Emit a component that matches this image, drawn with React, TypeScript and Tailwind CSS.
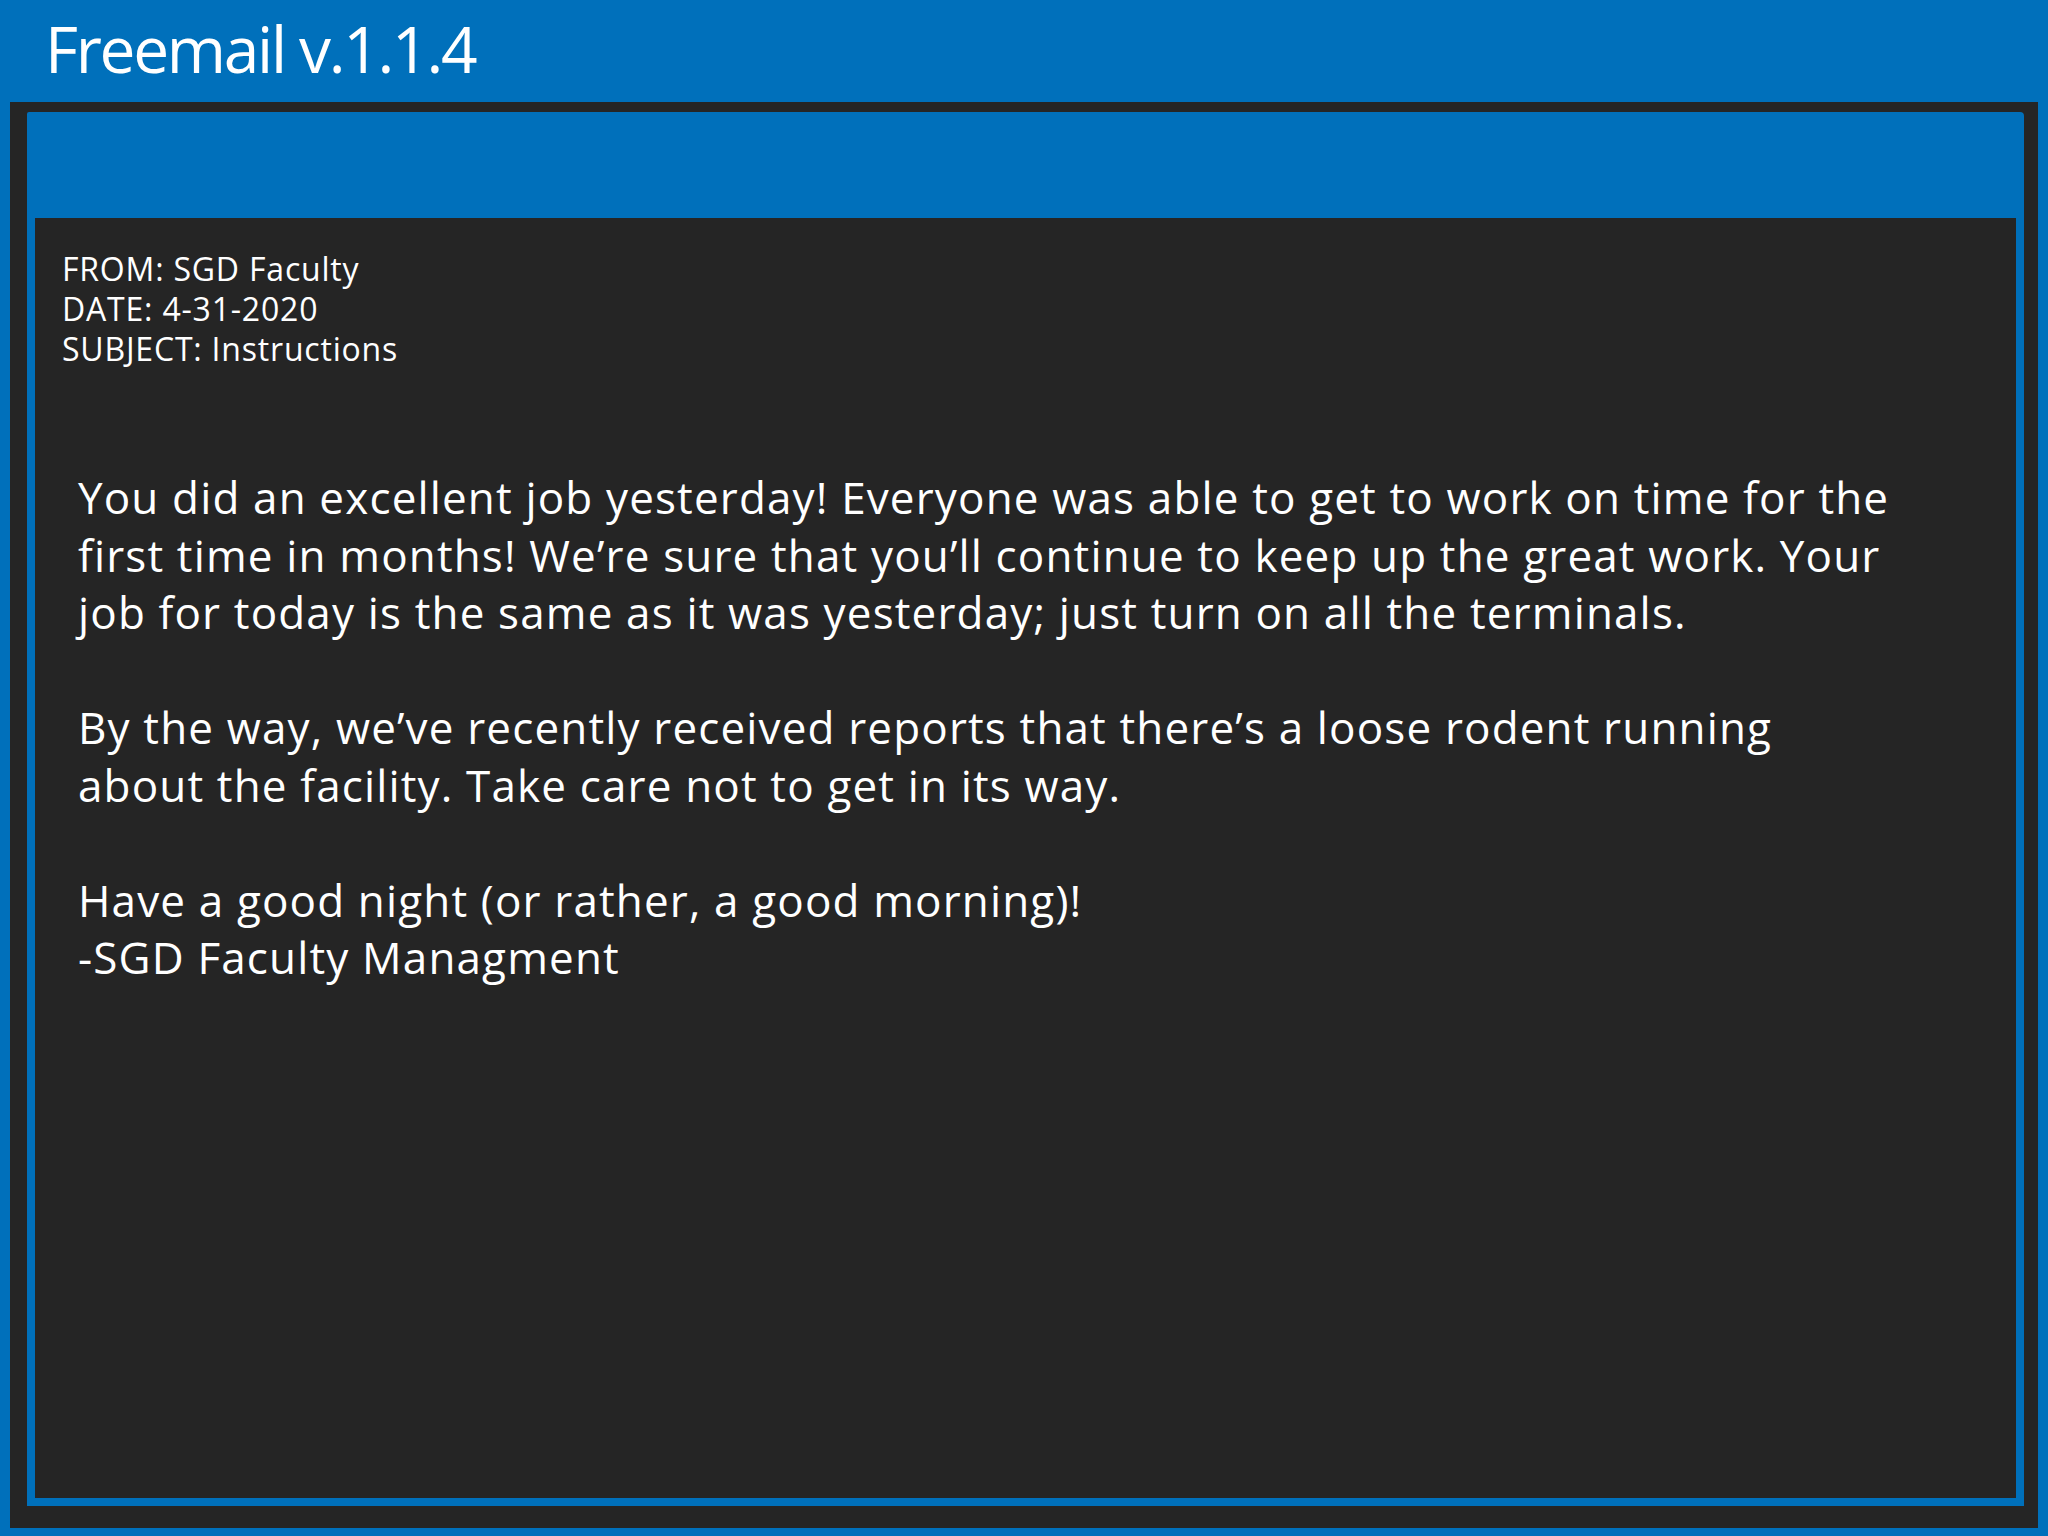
import React from "react";

export default function App() {
  const font = { fontFamily: '"Open Sans", "Noto Sans", sans-serif' };
  return (
    <div
      className="w-[2048px] h-[1536px] bg-[#0070bb] flex flex-col text-white overflow-hidden"
      style={font}
    >
      <header className="h-[102px] pt-[17px] pl-[45px] shrink-0">
        <h1 className="text-[64px] leading-[64px] font-normal tracking-[-2.3px]">Freemail v.1.1.4</h1>
      </header>
      <div className="mx-[10px] mb-[8px] flex-1 bg-[#252525] pl-[17px] pt-[10px] pr-[14px] pb-[22px] flex">
        <div className="flex-1 bg-[#0070bb] pt-[106px] px-[8px] pb-[8px] flex flex-col rounded-tl-[2px] rounded-tr-[4px]">
          <div className="flex-1 bg-[#252525] pt-[31px] pl-[27px]">
            <div className="text-[32px] leading-[40px] tracking-[0.8px]">
              <div>FROM: SGD Faculty</div>
              <div>DATE: 4-31-2020</div>
              <div>SUBJECT: Instructions</div>
            </div>
            <div className="mt-[100px] ml-[16px] text-[44px] leading-[57.5px] tracking-[1.15px]">
              <p>
                You did an excellent job yesterday! Everyone was able to get to work on time for the
                <br />
                first time in months! We’re sure that you’ll continue to keep up the great work. Your
                <br />
                job for today is the same as it was yesterday; just turn on all the terminals.
              </p>
              <p className="mt-[57.5px]">
                By the way, we’ve recently received reports that there’s a loose rodent running
                <br />
                about the facility. Take care not to get in its way.
              </p>
              <p className="mt-[57.5px]">
                Have a good night (or rather, a good morning)!
                <br />
                -SGD Faculty Managment
              </p>
            </div>
          </div>
        </div>
      </div>
    </div>
  );
}
